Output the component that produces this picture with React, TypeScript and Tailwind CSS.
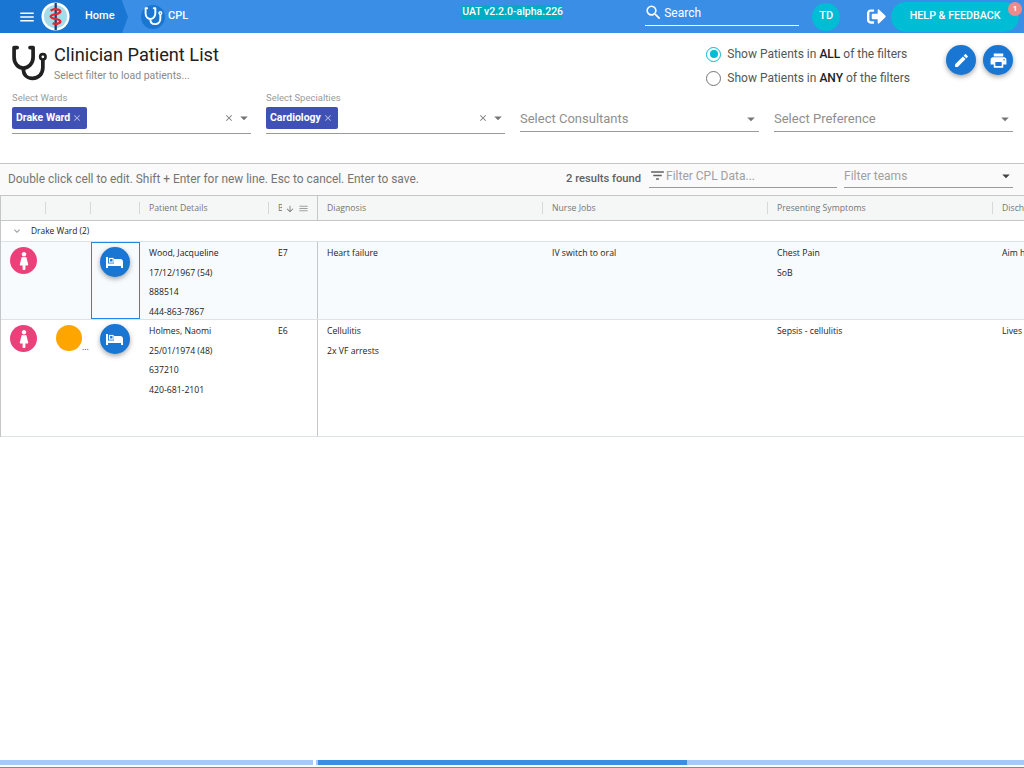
import React from "react";
import { MdMenu, MdSearch, MdEdit, MdPrint, MdFilterList, MdArrowDropDown, MdClose, MdArrowDownward, MdExpandMore } from "react-icons/md";
import { FaFemale, FaSignOutAlt } from "react-icons/fa";

const Steth = ({ className, color }: { className?: string; color: string }) => (
  <svg viewBox="0 0 36 36" className={className} fill="none" stroke={color} strokeLinecap="round" strokeLinejoin="round">
    <path d="M6 2.5 H3 V12 C3 18 7 22.5 12 22.5 C17 22.5 21.5 18 21.5 12 V2.5 H18.5" strokeWidth="3.6" />
    <path d="M12 23 C12 29 15.5 32.5 21 32.5 C27 32.5 31 28 31 22 V15" strokeWidth="3.6" />
    <circle cx="31" cy="11.5" r="2.6" strokeWidth="2.6" />
  </svg>
);

const Logo = () => (
  <svg viewBox="0 0 30 30" className="w-[29px] h-[29px] shrink-0">
    <circle cx="15" cy="15" r="14.5" fill="#ffffff" />
    <circle cx="15" cy="15" r="12" fill="#a5dcec" />
    <rect x="14" y="1" width="2.4" height="28" fill="#1f3f7a" />
    <path d="M10 9 C14 6 20 8 20 10 C20 13 10 12 10 15 C10 18 20 17 20 20 C20 23 14 23 12 22" stroke="#e0262e" strokeWidth="2.4" fill="none" />
  </svg>
);

const Bed = () => (
  <svg viewBox="0 0 17 11" className="w-[17px] h-[11px]" fill="#ffffff">
    <rect x="0" y="0" width="2" height="11" />
    <rect x="3.5" y="1.5" width="3.6" height="3.6" fill="none" stroke="#ffffff" strokeWidth="1.2" />
    <path d="M2 6.5 H8 V2 H14 A3 3 0 0 1 17 5 V11 H15 V9 H2 Z" />
  </svg>
);

const Chip = ({ label, w }: { label: string; w: string }) => (
  <span className={`flex items-center h-[22px] pl-1 rounded-[2px] bg-[#3f51b5] text-white text-[10.5px] font-bold ${w}`}>
    {label}
    <MdClose className="ml-[2px] text-[#b9bfe3]" size={10} />
  </span>
);

const ChipSelect = ({ title, label, w, width }: { title: string; label: string; w: string; width: string }) => (
  <div className={`${width} shrink-0`}>
    <div className="text-[9.5px] leading-[12px] text-[#9b9b9b]">{title}</div>
    <div className="flex items-center h-[30px] border-b border-[#9a9a9a] pb-[2px]">
      <Chip label={label} w={w} />
      <span className="ml-auto flex items-center text-[#757575] -mr-[2px]">
        <MdClose size={10} />
        <MdArrowDropDown size={18} className="ml-[1px]" />
      </span>
    </div>
  </div>
);

const PlainSelect = ({ label, width }: { label: string; width: string }) => (
  <div className={`${width} shrink-0 pt-[14px]`}>
    <div className="flex items-center justify-between h-[26px] border-b border-[#9a9a9a] text-[13px] text-[#8f8f8f]">
      {label}
      <MdArrowDropDown size={18} className="text-[#757575] -mr-[1px]" />
    </div>
  </div>
);

const Fab = ({ children }: { children: React.ReactNode }) => (
  <span className="flex items-center justify-center w-[30px] h-[30px] rounded-full bg-[#1976d2] text-white shadow-[0_2px_5px_rgba(0,0,0,0.35)]">
    {children}
  </span>
);

const Female = () => (
  <span className="flex items-center justify-center w-[27px] h-[27px] rounded-full bg-[#ec407a] text-white">
    <FaFemale size={18} />
  </span>
);

const cols = "grid grid-cols-[45px_45px_49px_129px_49px_225px_225px_225px_32px]";

const Head = ({ children, line = true }: { children?: React.ReactNode; line?: boolean }) => (
  <div className="relative flex items-center pl-[9px] pt-[1px] overflow-hidden whitespace-nowrap">
    {children}
    {line && <span className="absolute right-0 top-[6px] h-[12px] w-px bg-[#d5d8da]" />}
  </div>
);

const Lines = ({ items }: { items: string[] }) => (
  <div className="pl-[9px] pt-[2px] overflow-hidden whitespace-nowrap">
    {items.map((t) => (
      <div key={t} className="h-[19.6px] leading-[19.6px]">{t}</div>
    ))}
  </div>
);

export default function App() {
  return (
    <div className="relative w-[1024px] h-[768px] overflow-hidden bg-white font-['Roboto',sans-serif] text-[#212121]">
      <header className="flex items-center h-[33px] bg-[#3a8ee6] text-white">
        <div className="flex items-center h-full w-[122px] pl-[19px] bg-[#1976d2] font-medium text-[11px]">
          <MdMenu size={18} className="shrink-0 -mx-[1px]" />
          <span className="ml-[6px]"><Logo /></span>
          <span className="ml-[15px]">Home</span>
        </div>
        <span className="w-0 h-0 border-y-[16.5px] border-y-transparent border-l-[6px] border-l-[#1976d2]" />
        <span className="ml-[13px] flex items-center justify-center w-[24px] h-[24px] rounded-full bg-[#1976d2]">
          <Steth className="w-[19px] h-[19px]" color="#ffffff" />
        </span>
        <span className="ml-[3px] text-[11px] font-medium">CPL</span>
        <div className="ml-[273px] self-start mt-[5px] h-[14px] flex items-center bg-[#00acc1] px-px text-[10.5px] font-medium leading-none whitespace-nowrap w-[101px]">UAT v2.2.0-alpha.226</div>
        <div className="ml-[83px] self-start flex items-center w-[154px] h-[26px] border-b border-white text-[12px]">
          <MdSearch size={19} className="-ml-[1px]" />
          <span className="ml-[1px]">Search</span>
        </div>
        <span className="ml-[13px] flex items-center justify-center w-[28px] h-[28px] rounded-full bg-[#00bcd4] text-[11px] font-medium">TD</span>
        <FaSignOutAlt size={19} className="ml-[27px]" />
        <div className="relative ml-[5px] flex items-center justify-center w-[128px] h-[30px] rounded-full bg-[#00bcd4] text-[10.7px] font-medium">
          HELP &amp; FEEDBACK
          <span className="absolute right-[-3px] top-0 flex items-center justify-center w-[14px] h-[14px] rounded-full bg-[#ef8a8a] text-[8px] font-bold">1</span>
        </div>
      </header>

      <section className="flex h-[59px] pl-[11px]">
        <Steth className="w-[37px] h-[37px] mt-[12px] shrink-0" color="#212121" />
        <div className="ml-[6px] pt-[11px]">
          <div className="text-[18.2px] leading-[22px] font-normal text-[#212121]">Clinician Patient List</div>
          <div className="text-[10.5px] leading-[14px] mt-[3px] text-[#8a8a8a]">Select filter to load patients...</div>
        </div>
        <div className="ml-auto mt-[9px] text-[12px] text-[#555555]">
          <label className="flex items-center h-[24px]">
            <span className="flex items-center justify-center w-[15px] h-[15px] rounded-full border-[1.5px] border-[#00bcd4]">
              <span className="w-[8px] h-[8px] rounded-full bg-[#00bcd4]" />
            </span>
            <span className="ml-[6px]">Show Patients in <b className="font-medium text-[#212121]">ALL</b> of the filters</span>
          </label>
          <label className="flex items-center h-[24px]">
            <span className="w-[15px] h-[15px] rounded-full border-[1.5px] border-[#757575]" />
            <span className="ml-[6px]">Show Patients in <b className="font-medium text-[#212121]">ANY</b> of the filters</span>
          </label>
        </div>
        <div className="ml-[36px] mr-[11px] mt-[12px] flex gap-[7px]">
          <Fab><MdEdit size={17} /></Fab>
          <Fab><MdPrint size={19} /></Fab>
        </div>
      </section>

      <section className="flex gap-[15px] pl-[12px] h-[71px]">
        <ChipSelect title="Select Wards" label="Drake Ward" w="w-[75px]" width="w-[239px]" />
        <ChipSelect title="Select Specialties" label="Cardiology" w="w-[72px]" width="w-[239px]" />
        <PlainSelect label="Select Consultants" width="w-[239px]" />
        <PlainSelect label="Select Preference" width="w-[239px]" />
      </section>

      <section className="flex items-start h-[33px] border-y border-[#c4c7c7] bg-[#fafafa] pl-[8px] text-[#757575] whitespace-nowrap">
        <span className="w-[558px] mt-[7px] leading-[16px] text-[11.9px]">Double click cell to edit. Shift + Enter for new line. Esc to cancel. Enter to save.</span>
        <span className="w-[83px] mt-[7px] leading-[16px] text-[11.2px] font-medium text-[#616161]">2 results found</span>
        <span className="flex items-center w-[188px] h-[24px] border-b border-[#9a9a9a] text-[12px] text-[#a0a0a0]">
          <MdFilterList size={17} className="text-[#616161]" />
          Filter CPL Data...
        </span>
        <span className="ml-[7px] flex items-center justify-between w-[169px] h-[24px] border-b border-[#9a9a9a] text-[12px] text-[#a0a0a0]">
          Filter teams
          <MdArrowDropDown size={18} className="text-[#424242] -mr-[2px]" />
        </span>
      </section>

      <section className="border-l border-[#c4c7c7] text-[8.7px] text-[#212121] font-['Open_Sans',sans-serif]">
        <div className={`${cols} h-[25px] bg-[#f5f7f7] border-b border-[#c4c7c7] text-[#757575]`}>
          <Head />
          <Head />
          <Head />
          <Head>Patient Details</Head>
          <Head line={false}>
            <span className="w-[4px] overflow-hidden">B</span>
            <MdArrowDownward size={10} className="ml-[3px]" />
            <MdMenu size={11} className="ml-[3px] text-[#9e9e9e]" />
          </Head>
          <div className="col-start-6 relative flex items-center pl-[9px] pt-[1px] border-l border-[#c4c7c7] -ml-px">Diagnosis<span className="absolute right-0 top-[6px] h-[12px] w-px bg-[#d5d8da]" /></div>
          <Head>Nurse Jobs</Head>
          <Head>Presenting Symptoms</Head>
          <Head line={false}>Discharge</Head>
        </div>

        <div className="flex items-center h-[21px] pl-[10px] border-b border-[#dde2e5] text-[8.4px]">
          <MdExpandMore size={12} className="text-[#9e9e9e]" />
          <span className="ml-[8px]">Drake Ward (2)</span>
        </div>

        <div className={`${cols} h-[78px] bg-[#f8fbfd] border-b border-[#dde2e5]`}>
          <div className="pl-[9px] pt-[5px]"><Female /></div>
          <div />
          <div className="flex justify-center pt-[4px] pr-[2px] border border-[#1e88e5]"><Fab><Bed /></Fab></div>
          <Lines items={["Wood, Jacqueline", "17/12/1967 (54)", "888514", "444-863-7867"]} />
          <Lines items={["E7"]} />
          <div className="-ml-px border-l border-[#c4c7c7]"><Lines items={["Heart failure"]} /></div>
          <Lines items={["IV switch to oral"]} />
          <Lines items={["Chest Pain", "SoB"]} />
          <Lines items={["Aim home"]} />
        </div>

        <div className={`${cols} h-[117px] border-b border-[#dde2e5]`}>
          <div className="pl-[9px] pt-[5px]"><Female /></div>
          <div className="relative">
            <span className="absolute left-[10px] top-[5px] w-[26px] h-[26px] rounded-full bg-[#ffa500]" />
            <span className="absolute left-[36px] top-[21px] leading-[12px] text-[#424242]">...</span>
          </div>
          <div className="flex justify-center pt-[4px] pr-[2px]"><Fab><Bed /></Fab></div>
          <Lines items={["Holmes, Naomi", "25/01/1974 (48)", "637210", "420-681-2101"]} />
          <Lines items={["E6"]} />
          <div className="-ml-px border-l border-[#c4c7c7]"><Lines items={["Cellulitis", "2x VF arrests"]} /></div>
          <div />
          <Lines items={["Sepsis - cellulitis"]} />
          <Lines items={["Lives alone"]} />
        </div>
      </section>

      <div className="absolute left-0 right-0 bottom-[3px] flex h-[5px] bg-white">
        <div className="w-[313px] bg-[#a6cbf3]" />
        <div className="ml-[3px] w-[2px] bg-[#a6cbf3]" />
        <div className="w-[369px] bg-[#3a8ee6]" />
        <div className="flex-1 bg-[#a6cbf3]" />
      </div>
      <div className="absolute left-0 right-0 bottom-0 h-px bg-[#8a8a8a]" />
    </div>
  );
}
